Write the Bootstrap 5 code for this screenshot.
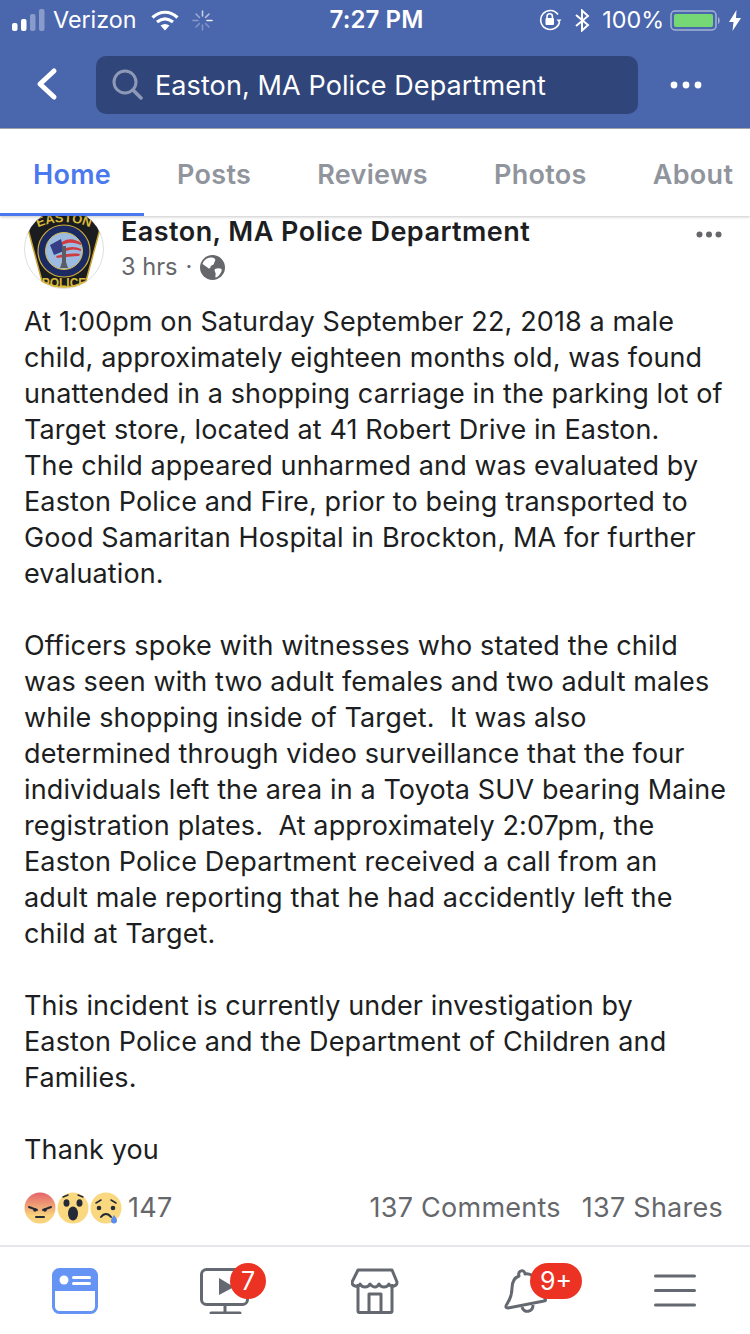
<!DOCTYPE html>
<html lang="en">
<head>
<meta charset="utf-8">
<title>Easton, MA Police Department</title>
<link rel="stylesheet" href="https://cdn.jsdelivr.net/npm/bootstrap@5.3.0/dist/css/bootstrap.min.css">
<style>
html,body{width:750px;height:1334px;overflow:hidden;background:#fff}
body{font-family:Inter,"Liberation Sans",sans-serif;color:#1c1e21}
.page-shell{height:1334px}
.top-blue{background:#4a66ad;color:#fff;border-bottom:1px solid #a5a9b3}
.status-row{height:40px;padding:0 9px 0 12px;font-size:23.300px}
.status-side{flex:1 1 0}
.status-time{font-size:24px;font-weight:600;letter-spacing:.1px}
.carrier{margin-left:8px;margin-right:14px}
.gap-spin{margin-left:13px}
.gap-bt{margin-left:13px}
.gap-pct{margin-left:12px}
.gap-batt{margin-left:6px}
.gap-bolt{margin-left:8px}
.search-row{height:88px;padding:0 0 0 36px}
.search-field{width:542px;height:58px;margin:2px 0 0 38px;background:#30467a;border-radius:10px;padding-left:16px;font-size:27px;letter-spacing:.1px}
.search-field svg{margin-right:12px}
.search-label{padding-top:2px}
.more-dots{margin:2px 0 0 32px}
.tab-strip{height:87px;padding:6px 0 0 33px;gap:66px;background:#fff;font-size:27px;font-weight:600;letter-spacing:.3px;color:#90949c;box-shadow:0 1px 3px rgba(0,0,0,.22);z-index:2;overflow:hidden}
.tab-home{color:#4a78ee}
.tab-line{left:0;bottom:0;width:144px;height:3px;background:#4a78ee}
.post-head{padding:0 28px 0 24px;height:88px}
.avatar-wrap{width:80px;height:80px;margin-top:-7px;flex:none}
.post-meta{margin-left:17px;padding-top:0}
.post-name{font-size:27px;font-weight:600;line-height:32px;letter-spacing:.45px;color:#1c1e21}
.post-sub{font-size:23.600px;line-height:36px;color:#65676b;margin-top:1px}
.head-dots{margin-top:15px}
.post-copy{font-size:27px;line-height:36px;padding:0 0 0 24px;white-space:pre-wrap;margin:0;letter-spacing:.12px;color:#1c1e21}
.react-row{height:38px;padding:0 27px 0 24px;color:#65676b;font-size:27px;letter-spacing:.25px}
.face-stack svg{display:block}
.face-stack svg+svg{margin-left:1px}
.react-count{margin-left:6px}
.react-stats{gap:21px}
.tab-bottom{height:89px;margin-top:18px;border-top:2px solid #e4e6e9;background:#fff}
.bottom-slot{width:150px;height:87px}
.count-pill{position:absolute;background:#ec3323;color:#fff;height:36px;border-radius:18px;font-size:25px;line-height:36px;text-align:center}
.pill-video{left:80px;top:16px;width:36px}
.pill-bell{left:80px;top:16px;width:52px}
</style>
</head>
<body>
<div class="page-shell d-flex flex-column">
  <header class="top-blue">
    <div class="status-row d-flex align-items-center">
      <div class="status-side d-flex align-items-center">
        <svg width="33" height="24" viewBox="0 0 33 24"><rect x="0" y="15" width="5.500" height="8" rx="2" fill="#fff"/><rect x="9" y="11" width="5.500" height="12" rx="2" fill="#fff"/><rect x="18" y="6" width="5.500" height="17" rx="2" fill="#fff" fill-opacity=".35"/><rect x="27" y="1" width="5.500" height="22" rx="2" fill="#fff" fill-opacity=".35"/></svg>
        <span class="carrier">Verizon</span>
        <svg width="28" height="21" viewBox="0 0 28 21" fill="none" stroke="#fff" stroke-width="3.200"><path d="M1.500 7.500C9 .5 19 .5 26.500 7.500"/><path d="M6 12c5-4 11-4 16 0"/><path d="M9.500 15.500c3-2 6-2 9 0L14 20.500z" fill="#fff" stroke="none"/></svg>
        <svg class="gap-spin" width="21" height="21" viewBox="0 0 21 21" stroke="#fff" stroke-width="1.600" stroke-linecap="round"><path d="M10.500 1v5" stroke-opacity=".7"/><path d="M17 4l-3.500 3.500" stroke-opacity=".6"/><path d="M20 10.500h-5" stroke-opacity=".9"/><path d="M17 17l-3.500-3.500" stroke-opacity=".3"/><path d="M10.500 20v-5" stroke-opacity=".3"/><path d="M4 17l3.500-3.500" stroke-opacity=".3"/><path d="M1 10.500h5" stroke-opacity=".35"/><path d="M4 4l3.500 3.500" stroke-opacity=".45"/></svg>
      </div>
      <div class="status-time">7:27 PM</div>
      <div class="status-side d-flex align-items-center justify-content-end">
        <svg width="23" height="22" viewBox="0 0 23 22" fill="none" stroke="#fff" stroke-width="1.600"><path d="M20.500 13A9.500 9.500 0 1 1 19 5.500"/><path d="M22.500 10.500h-5l2.500 3z" fill="#fff" stroke="none"/><rect x="6.500" y="9" width="8.500" height="7" rx="1" fill="#fff" stroke="none"/><path d="M8 9V7.500a2.700 2.700 0 0 1 5.400 0V9"/></svg>
        <svg class="gap-bt" width="15" height="23" viewBox="0 0 15 23" fill="none" stroke="#fff" stroke-width="2"><path d="M1 6l12 10-6 5.500V1.500L13 7 1 17"/></svg>
        <span class="gap-pct">100%</span>
        <svg class="gap-batt" width="51" height="22" viewBox="0 0 51 22"><rect x="1" y="2" width="45" height="19" rx="4" fill="none" stroke="#fff" stroke-opacity=".5" stroke-width="1.500"/><rect x="4" y="5" width="39" height="13" rx="2" fill="#75d874"/><path d="M48 8c2 .5 2.500 6 0 7z" fill="#fff" fill-opacity=".5"/></svg>
        <svg class="gap-bolt" width="12" height="21" viewBox="0 0 12 21"><path d="M7.500 0L0 12h4.500L3.500 21 12 8H7z" fill="#fff"/></svg>
      </div>
    </div>
    <div class="search-row d-flex align-items-center">
      <svg width="22" height="34" viewBox="0 0 22 34" fill="none" stroke="#fff" stroke-width="5" stroke-linecap="round" stroke-linejoin="round"><path d="M18 4L4 17l14 13"/></svg>
      <div class="search-field d-flex align-items-center">
        <svg width="31" height="32" viewBox="0 0 31 32" fill="none" stroke="#8d99b7" stroke-width="3" stroke-linecap="round"><circle cx="13" cy="13" r="11"/><path d="M21 21l8 8" stroke-width="3.500"/></svg>
        <span class="search-label">Easton, MA Police Department</span>
      </div>
      <svg class="more-dots" width="32" height="8" viewBox="0 0 32 8" fill="#fff"><circle cx="4" cy="4" r="3.400"/><circle cx="16" cy="4" r="3.400"/><circle cx="28" cy="4" r="3.400"/></svg>
    </div>
  </header>

  <nav class="tab-strip d-flex align-items-center position-relative">
    <span class="tab-home">Home</span><span>Posts</span><span>Reviews</span><span>Photos</span><span>About</span>
    <span class="tab-line position-absolute"></span>
  </nav>

  <main class="flex-grow-1 d-flex flex-column">
    <div class="post-head d-flex">
      <svg class="avatar-wrap" viewBox="0 0 80 80">
        <defs><clipPath id="avatar-clip"><circle cx="40" cy="40" r="39.500"/></clipPath><path id="easton-arc" d="M8 21Q40 5 72 21"/></defs>
        <circle cx="40" cy="40" r="39.500" fill="#fff" stroke="#dddfe2"/>
        <g clip-path="url(#avatar-clip)">
          <path d="M13 2L4 20 18 72Q40 84 62 72L76 20 67 2z" fill="#1b1c1f" stroke="#c9a52e" stroke-width="1.500"/>
          <text text-anchor="middle" font-family="Liberation Sans,sans-serif" font-weight="700" font-size="13" fill="#d8b93a"><textPath href="#easton-arc" startOffset="50%">EASTON</textPath></text>
          <circle cx="40" cy="42" r="26" fill="#1c2a63" stroke="#cfae3a" stroke-width="1.200"/>
          <circle cx="40" cy="42" r="18.500" fill="#9dbbe0" stroke="#d4b846" stroke-width="1"/>
          <path d="M26 36l11-6 3 12-10 4z" fill="#343f86"/>
          <path d="M38 33c8-5 14-2 19 1v2c-5-2-11-4-19 0zM42 39c6-2 11-1 15 1v2c-5-2-10-2-15 0zM32 47c8-2 17-3 24-2l-1 2c-6 0-14 1-22 2z" fill="#cf3b3f"/>
          <path d="M38 53V37h4v16l2 6h-8z" fill="#5a5d66"/>
          <text x="40" y="78" text-anchor="middle" font-family="Liberation Sans,sans-serif" font-weight="700" font-size="12" fill="#d8b93a">POLICE</text>
        </g>
      </svg>
      <div class="post-meta flex-grow-1">
        <div class="post-name">Easton, MA Police Department</div>
        <div class="post-sub d-flex align-items-center">3 hrs<span class="mx-2">·</span><svg width="25" height="25" viewBox="0 0 25 25"><circle cx="12.500" cy="12.500" r="12.500" fill="#65676b"/><path d="M7 3.500c3-1.500 7-1 8 .5s-1 3-1 4.500-3 1.500-3.500 3.500-2 1.500-3 .5S3.500 10 2.500 9C3 6.500 5 4.500 7 3.500zM15 14c2-1 5-1 6.500 0 .5 1 0 3-1.500 5s-3 3.500-4.500 3.500c-.5-1.500.5-3 0-4.500s-1.500-3-.5-4z" fill="#fff"/></svg></div>
      </div>
      <svg class="head-dots" width="26" height="7" viewBox="0 0 26 7" fill="#65676b"><circle cx="3.500" cy="3.500" r="3"/><circle cx="13" cy="3.500" r="3"/><circle cx="22.500" cy="3.500" r="3"/></svg>
    </div>
    <p class="post-copy">At 1:00pm on Saturday September 22, 2018 a male
child, approximately eighteen months old, was found
unattended in a shopping carriage in the parking lot of
Target store, located at 41 Robert Drive in Easton.
The child appeared unharmed and was evaluated by
Easton Police and Fire, prior to being transported to
Good Samaritan Hospital in Brockton, MA for further
evaluation.

Officers spoke with witnesses who stated the child
was seen with two adult females and two adult males
while shopping inside of Target.  It was also
determined through video surveillance that the four
individuals left the area in a Toyota SUV bearing Maine
registration plates.  At approximately 2:07pm, the
Easton Police Department received a call from an
adult male reporting that he had accidently left the
child at Target.

This incident is currently under investigation by
Easton Police and the Department of Children and
Families.

Thank you</p>
    <div class="mt-auto">
      <div class="react-row d-flex align-items-center justify-content-between">
        <div class="d-flex align-items-center">
          <div class="face-stack d-flex">
            <svg width="32" height="32" viewBox="0 0 32 32"><defs><linearGradient id="angry-fill" x1="0" y1="0" x2="0" y2="1"><stop offset="0" stop-color="#e4626b"/><stop offset=".75" stop-color="#f8d27c"/></linearGradient></defs><circle cx="16" cy="16" r="15.500" fill="url(#angry-fill)"/><path d="M5 15l8 3M27 15l-8 3" stroke="#252a39" stroke-width="2" stroke-linecap="round"/><circle cx="11" cy="18" r="1.800" fill="#252a39"/><circle cx="21" cy="18" r="1.800" fill="#252a39"/><path d="M12 25h8" stroke="#252a39" stroke-width="2" stroke-linecap="round"/></svg>
            <svg width="32" height="32" viewBox="0 0 32 32"><circle cx="16" cy="16" r="15.500" fill="#fad87f"/><ellipse cx="9.500" cy="11" rx="3" ry="3.800" fill="#252a39"/><ellipse cx="22.500" cy="11" rx="3" ry="3.800" fill="#252a39"/><ellipse cx="16" cy="21.500" rx="5" ry="7" fill="#252a39"/><path d="M6 5l5-2M26 5l-5-2" stroke="#252a39" stroke-width="1.500" stroke-linecap="round"/></svg>
            <svg width="32" height="32" viewBox="0 0 32 32"><circle cx="16" cy="16" r="15.500" fill="#fad87f"/><circle cx="9" cy="16" r="2.300" fill="#252a39"/><circle cx="23" cy="16" r="2.300" fill="#252a39"/><path d="M11 25c3-4 7-4 10 0" fill="none" stroke="#252a39" stroke-width="2" stroke-linecap="round"/><path d="M6 11l5-3M26 11l-5-3" stroke="#252a39" stroke-width="1.500" stroke-linecap="round"/><path d="M24 23c-2 3-3 4-3 5.500a3 3 0 0 0 6 0c0-1.500-1-2.500-3-5.500z" fill="#5b8def"/></svg>
          </div>
          <span class="react-count">147</span>
        </div>
        <div class="react-stats d-flex"><span>137 Comments</span><span>137 Shares</span></div>
      </div>
      <div class="tab-bottom d-flex">
        <div class="bottom-slot d-flex align-items-center justify-content-center">
          <svg width="46" height="46" viewBox="0 0 46 46"><rect x="1.500" y="1.500" width="43" height="43" rx="6" fill="none" stroke="#6594f5" stroke-width="3"/><path d="M1.500 7a6 6 0 0 1 6-6h31a6 6 0 0 1 6 6v16h-43z" fill="#6594f5"/><circle cx="12" cy="12" r="4.500" fill="#fff"/><rect x="20" y="8" width="19" height="3" rx="1.500" fill="#fff"/><rect x="20" y="14" width="19" height="3" rx="1.500" fill="#fff"/></svg>
        </div>
        <div class="bottom-slot position-relative d-flex align-items-center justify-content-center">
          <svg width="50" height="46" viewBox="0 0 50 46" fill="none" stroke="#646870" stroke-width="3" stroke-linecap="round"><rect x="1.500" y="1.500" width="46" height="35" rx="5"/><path d="M25 37v7M11 45h29"/><path d="M19 10l15 9-15 8z" fill="#646870" stroke="none"/></svg>
          <span class="count-pill pill-video">7</span>
        </div>
        <div class="bottom-slot d-flex align-items-center justify-content-center">
          <svg width="48" height="46" viewBox="0 0 48 46" fill="none" stroke="#646870" stroke-width="3" stroke-linejoin="round"><path d="M7 16v27a1.500 1.500 0 0 0 1.500 1.500h31A1.500 1.500 0 0 0 41 43V16"/><path d="M7 2h34l5 12a4 4 0 0 1-3 4c-3 1-5-1-5-2-1 2-3 3-5 3s-4-1-5-3c-1 2-3 3-4 3s-4-1-5-3c-1 2-3 3-5 3s-4-1-5-3c0 1-2 3-5 2a4 4 0 0 1-3-4z"/><path d="M18 44V26h12v18"/></svg>
        </div>
        <div class="bottom-slot position-relative d-flex align-items-center justify-content-center">
          <svg width="48" height="48" viewBox="-3 0 48 48" fill="none" stroke="#646870" stroke-width="3" stroke-linejoin="round"><path d="M15 9c-5 2-7 6-7 12 0 6-1 10-5 16-2 3-1 4 1 4l36-7c2 0 2-2 0-4-3-3-6-7-7-12-1-8-6-12-12-11 0-5-8-4-6 2z"/><path d="M18 40c2 7 11 5 11-2"/></svg>
          <span class="count-pill pill-bell">9+</span>
        </div>
        <div class="bottom-slot d-flex align-items-center justify-content-center">
          <svg width="42" height="33" viewBox="0 0 42 33" stroke="#646870" stroke-width="3" stroke-linecap="round"><path d="M1.500 2h39M1.500 16.500h39M1.500 31h39"/></svg>
        </div>
      </div>
    </div>
  </main>
</div>
<script src="https://cdn.jsdelivr.net/npm/bootstrap@5.3.0/dist/js/bootstrap.bundle.min.js"></script>
</body>
</html>
